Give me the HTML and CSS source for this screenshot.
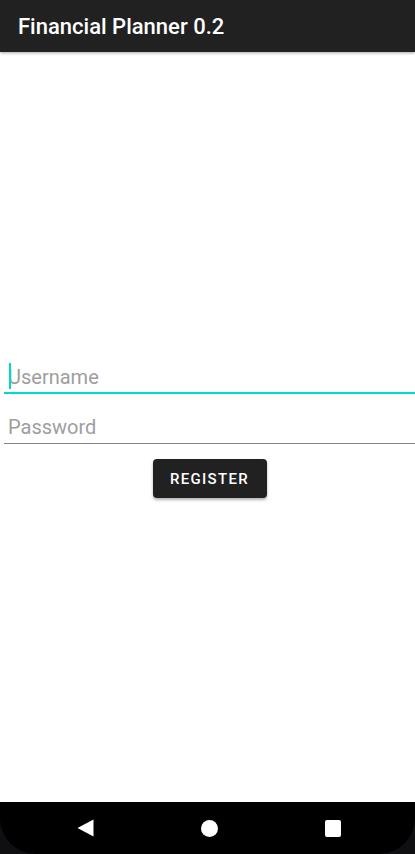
FILE: index.html
```html
<!DOCTYPE html>
<html lang="en">
<head>
<meta charset="utf-8">
<title>Financial Planner 0.2</title>
<link rel="stylesheet" href="styles.css">
</head>
<body>
<div class="screen">
  <header class="appbar">Financial Planner 0.2</header>
  <main class="main">
    <form class="form">
      <div class="field active"><span class="caret"></span><span class="hint">Username</span></div>
      <div class="field"><span class="hint">Password</span></div>
      <div class="actions"><button type="button" class="btn">REGISTER</button></div>
    </form>
  </main>
  <nav class="navwrap">
    <div class="navbar">
      <span class="slot">
        <svg width="17" height="18" viewBox="0 0 17 18"><path d="M16.5 0.5 L16.5 17.5 L0.5 9 Z" fill="#fff"/></svg>
      </span>
      <span class="slot"><span class="home"></span></span>
      <span class="slot"><span class="recent"></span></span>
    </div>
  </nav>
</div>
</body>
</html>
```
FILE: styles.css
```css
html, body {
  margin: 0;
  padding: 0;
  background: #fff;
}
.screen {
  width: 415px;
  height: 854px;
  display: flex;
  flex-direction: column;
  font-family: Roboto, "Liberation Sans", sans-serif;
}
.appbar {
  height: 52px;
  flex: none;
  background: #212121;
  color: #fff;
  font-size: 22px;
  font-weight: 500;
  display: flex;
  align-items: center;
  padding-left: 18px;
  padding-top: 1px;
  box-sizing: border-box;
  box-shadow: 0 1px 3px rgba(0,0,0,0.35);
  position: relative;
  z-index: 1;
}
.main {
  flex: 1;
  display: flex;
  flex-direction: column;
  justify-content: center;
  background: #fff;
}
.form {
  margin: 0 0 0 4px;
  padding-bottom: 12px;
}
.field {
  position: relative;
  box-sizing: border-box;
  height: 50px;
  padding: 22px 0 0 4px;
  font-size: 20px;
  line-height: 22px;
  color: #9e9e9e;
  border-bottom: 1px solid #858585;
}
.field.active {
  border-bottom: 2px solid #03dac5;
}
.caret {
  position: absolute;
  left: 4.5px;
  top: 19px;
  width: 2px;
  height: 26px;
  background: #03dac5;
}
.actions {
  display: flex;
  justify-content: center;
  padding-top: 15px;
}
.btn {
  width: 114px;
  height: 39px;
  border: none;
  border-radius: 4px;
  background: #212121;
  color: #fff;
  font-family: Roboto, "Liberation Sans", sans-serif;
  font-size: 15px;
  font-weight: 500;
  letter-spacing: 1.3px;
  box-shadow: 0 2px 3px rgba(0,0,0,0.3);
  padding: 0;
}
.navwrap {
  height: 52px;
  flex: none;
  background: #0f0f12;
}
.navbar {
  height: 52px;
  background: #000;
  border-radius: 0 0 36px 36px;
  display: flex;
  justify-content: center;
  align-items: center;
  gap: 64px;
  padding-left: 3px;
  box-sizing: border-box;
}
.slot {
  width: 60px;
  height: 52px;
  display: flex;
  align-items: center;
  justify-content: center;
}
.home {
  width: 17px;
  height: 17px;
  border-radius: 50%;
  background: #fff;
}
.recent {
  width: 16px;
  height: 17px;
  border-radius: 2px;
  background: #fff;
}
```
